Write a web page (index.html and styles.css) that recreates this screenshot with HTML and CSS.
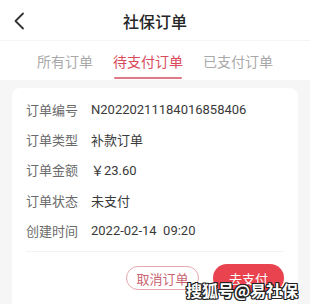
FILE: index.html
```html
<!DOCTYPE html>
<html lang="zh">
<head>
<meta charset="utf-8">
<link rel="stylesheet" href="styles.css">
</head>
<body>
<div class="page">
  <header class="topbar">
    <svg class="back" width="12" height="18" viewBox="0 0 12 18"><path d="M10 1.5 L2.5 9 L10 16.5" fill="none" stroke="#333" stroke-width="1.8" stroke-linecap="round" stroke-linejoin="round"/></svg>
    <h1 class="title">社保订单</h1>
  </header>
  <nav class="tabs">
    <span class="tab">所有订单</span>
    <span class="tab active">待支付订单</span>
    <span class="tab">已支付订单</span>
  </nav>
  <main class="content">
    <section class="card">
      <div class="rows">
        <div class="row"><span class="label">订单编号</span><span class="value">N20220211184016858406</span></div>
        <div class="row"><span class="label">订单类型</span><span class="value">补款订单</span></div>
        <div class="row"><span class="label">订单金额</span><span class="value">￥23.60</span></div>
        <div class="row"><span class="label">订单状态</span><span class="value">未支付</span></div>
        <div class="row"><span class="label">创建时间</span><span class="value">2022-02-14&nbsp;&nbsp;09:20</span></div>
      </div>
      <div class="actions">
        <button class="btn outline">取消订单</button>
        <button class="btn solid">去支付</button>
      </div>
    </section>
  </main>
  <div class="watermark">搜狐号@易社保</div>
</div>
</body>
</html>
```
FILE: styles.css
```css
* { box-sizing: border-box; margin: 0; padding: 0; }
html, body { width: 310px; height: 304px; overflow: hidden; }
body { font-family: "Noto Sans CJK SC", Roboto, "Noto Sans", sans-serif; background: #f6f6f7; }
.page { position: relative; width: 310px; height: 304px; display: flex; flex-direction: column; }
.topbar { height: 40px; background: #fff; display: flex; align-items: center; justify-content: center; position: relative; }
.back { position: absolute; left: 13px; top: 12px; }
.title { font-size: 16px; font-weight: 500; color: #262626; line-height: 1; margin-top: 2px; }
.tabs { height: 40px; background: #fff; display: flex; justify-content: center; gap: 20px; padding-top: 10px; border-top: 1px solid #f4f4f4; }
.tab { font-size: 14px; color: #a9a9a9; line-height: 20px; height: 29px; position: relative; }
.tab.active { color: #d94a5b; }
.tab.active::after { content: ""; position: absolute; left: 1px; right: 1px; bottom: 1px; height: 2px; border-radius: 1px; background: #e07a88; }
.content { flex: 1; padding: 8px 12px 0; }
.card { background: #fff; border-radius: 8px 8px 0 0; height: 100%; padding: 6px 14px 0; }
.rows { display: flex; flex-direction: column; border-bottom: 1px solid #f3f3f3; padding-bottom: 6px; }
.row { display: flex; height: 30.3px; align-items: center; font-size: 13px; }
.label { width: 65px; color: #6a6a6a; }
.value { color: #3a3a3a; font-family: Roboto, "Noto Sans CJK SC", sans-serif; }
.actions { display: flex; justify-content: flex-end; gap: 14px; padding-top: 14px; }
.btn { height: 24px; border-radius: 12px; font-size: 13px; font-family: "Noto Sans CJK SC", sans-serif; line-height: 1; }
.btn.outline { width: 73px; background: #fff; color: #c9636f; border: 1px solid #e7a7ae; }
.btn.solid { width: 71px; height: 28px; margin-top: -2px; border-radius: 14px; background: #e8434f; color: #fff; border: none; }
.watermark { position: absolute; left: 186px; top: 280px; font-size: 16px; font-weight: 700; color: #fff; text-shadow: -1px -1px 0 #222, 1px -1px 0 #222, -1px 1px 0 #222, 1px 1px 0 #222, 0 1px 0 #222, 1px 0 0 #222, 0 -1px 0 #222, -1px 0 0 #222; line-height: 20px; }
```
